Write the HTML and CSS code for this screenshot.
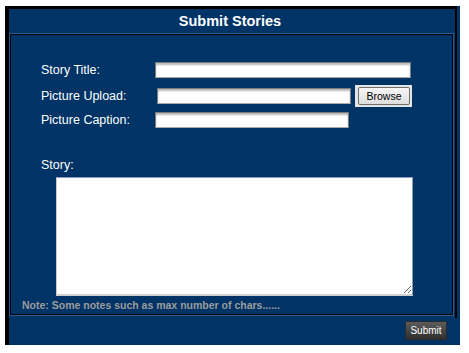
FILE: index.html
```html
<!DOCTYPE html>
<html lang="en">
<head>
    <meta charset="UTF-8">
    <meta name="viewport" content="width=device-width, initial-scale=1.0">
    <title>Submit Stories</title>
    <link rel="stylesheet" href="styles.css">
</head>
<body>
    <div class="panel">
        <div class="panel-top">
            <h1 class="panel-title">Submit Stories</h1>

            <form class="story-form">
                <div class="fields">
                    <div class="field-row">
                        <label for="storyTitle">Story Title:</label>
                        <input type="text" id="storyTitle" class="text-input wide">
                    </div>
                    <div class="field-row upload-row">
                        <label for="pictureName">Picture Upload:</label>
                        <input type="text" id="pictureName" class="text-input short upload-input">
                        <span class="browse-frame"><button type="button" class="browse-button">Browse</button></span>
                    </div>
                    <div class="field-row">
                        <label for="pictureCaption">Picture Caption:</label>
                        <input type="text" id="pictureCaption" class="text-input short">
                    </div>

                    <label for="storyText" class="story-label">Story:</label>
                    <textarea id="storyText" class="story-text"></textarea>
                </div>
                <p class="note">Note: Some notes such as max number of chars......</p>
            </form>
        </div>

        <div class="panel-footer">
            <button type="button" class="submit-button">Submit</button>
        </div>
    </div>
</body>
</html>
```

FILE: styles.css
```css
* { margin: 0; padding: 0; box-sizing: border-box; }
body {
    background: #fff;
    font-family: 'Liberation Sans', Arial, sans-serif;
    color: #fff;
}
.panel {
    width: 455px; height: 339px;
    margin: 6px 0 0 5px;
    background: #003366;
    border-left: 4px solid #000;
    padding-right: 3px;
}
.panel-top {
    border-top: 3px solid #000;
    border-right: 2px solid #000;
    padding-bottom: 3px;
}
.panel-title {
    height: 25px;
    line-height: 24px;
    text-align: center;
    font-size: 14.5px;
    font-weight: bold;
    padding-right: 4px;
}

.story-form {
    margin: 0 2px 0 1px;
    border: 1px solid #000;
    box-shadow: 0 0 0 1px #2b5b8f;
    padding: 27px 0 2px 11px;
}
.fields { padding-left: 19px; }
.field-row {
    display: flex;
    align-items: center;
    height: 16px;
}
.field-row + .field-row { margin-top: 5px; }
.upload-row { height: 22px; margin-top: 7px !important; }
.field-row label {
    width: 114px;
    font-size: 12.5px;
}
.text-input {
    height: 16px;
    background: #fff;
    border: 1px solid #7c7c7c;
    border-bottom-color: #a8a8a8;
    box-shadow: inset 0 2px 2px rgba(0, 0, 0, 0.28);
}
.text-input.wide { width: 256px; }
.text-input.short { width: 194px; }
.upload-input { margin-left: 2px; }
.browse-frame {
    display: flex;
    align-items: center;
    justify-content: center;
    width: 57px; height: 22px;
    margin-left: 4px;
    background: #e4e4e4;
    padding: 2px 2px 2px 3px;
}
.browse-button {
    width: 100%; height: 18px;
    border: 1px solid #6f6f6f;
    border-radius: 2px;
    background: linear-gradient(#f6f6f6, #dedede);
    font-family: 'Liberation Sans', Arial, sans-serif;
    font-size: 10.5px;
    color: #000;
}

.story-label {
    display: block;
    margin-top: 30px;
    font-size: 12.5px;
    line-height: 15px;
}
.story-text {
    display: block;
    width: 357px; height: 119px;
    margin: 4px 0 0 15px;
    background: #fff;
    border: 1px solid #8c9cb4;
    border-left-color: #c8c8c8;
    border-bottom: 2px solid #d0d0d0;
}
.note {
    margin-top: 3px;
    font-size: 10.5px;
    line-height: 13px;
    font-weight: bold;
    color: #9c9c9c;
}

.panel-footer {
    display: flex;
    justify-content: flex-end;
    padding: 3px 10px 5px 0;
}
.submit-button {
    width: 42px; height: 19px;
    border: 1px solid #2a2a2a;
    background: linear-gradient(#5c5c5c, #2f2f2f);
    color: #fff;
    font-family: 'Liberation Sans', Arial, sans-serif;
    font-size: 10px;
}
```
